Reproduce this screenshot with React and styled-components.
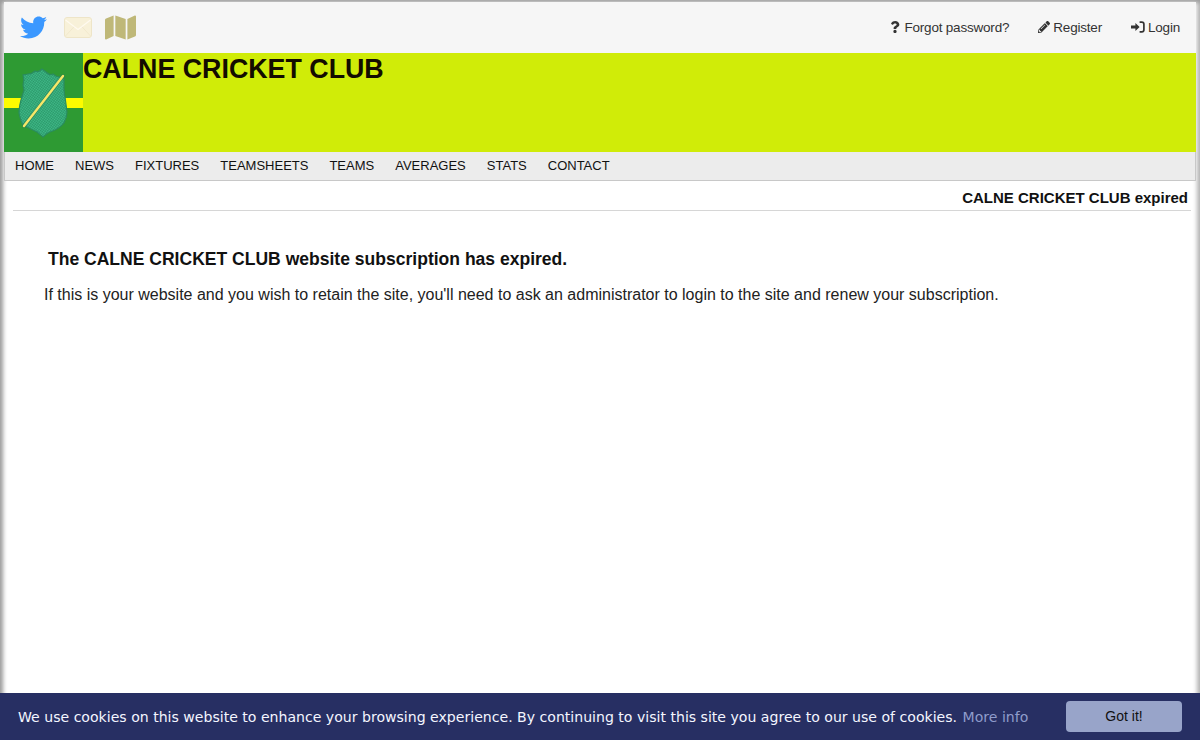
import React from 'react'
import styled, { createGlobalStyle } from 'styled-components'
import { FaTwitter, FaMap, FaQuestion, FaPencilAlt } from 'react-icons/fa'

const GlobalStyle = createGlobalStyle`
html,body{
  margin:0;
  padding:0;
  height:100%;
  background:#fff;
  font-family:"Liberation Sans",Arial,sans-serif;
  overflow:hidden;
}
`

const Page = styled.div`
height:740px;
box-sizing:border-box;
padding:2px 4px 0;
background:#fff;
box-shadow:inset 3px 2px 4px #9a9a9a,inset -3px 0 4px #b4b4b4;
`

const TopBar = styled.div`
height:51px;
box-sizing:border-box;
background:#f6f6f6;
display:flex;
align-items:center;
justify-content:space-between;
padding:0 16px 1px 16px;
`

const Social = styled.div`
display:flex;
align-items:center;
`

const SocialLink = styled.a`
display:flex;
color:${props => props.$color};
margin-right:${props => props.$gap}px;
font-size:${props => props.$size}px;
`

const UserLinks = styled.div`
display:flex;
align-items:center;
gap:29px;
`

const UserLink = styled.a`
display:flex;
align-items:center;
gap:3px;
font-size:13.5px;
color:#333;
letter-spacing:-0.2px;
svg{
  font-size:12px;
}
`

const Banner = styled.div`
height:99px;
background:#d0ec08;
display:flex;
align-items:flex-start;
`

const Logo = styled.svg`
display:block;
width:79px;
height:99px;
flex:none;
`

const ClubName = styled.h1`
margin:0;
font-size:26.8px;
line-height:32px;
font-weight:bold;
color:#130c00;
`

const Nav = styled.nav`
height:29px;
box-sizing:border-box;
background:#ececec;
border:1px solid #c8c8c8;
border-top:0;
display:flex;
align-items:center;
padding:0 10px 2px 10px;
gap:21px;
`

const NavItem = styled.a`
font-size:13px;
color:#111;
`

const Crumb = styled.div`
margin:0 5px 0 9px;
height:30px;
box-sizing:border-box;
border-bottom:1px solid #d6d6d6;
text-align:right;
padding:8px 3px 0 0;
font-size:15px;
line-height:17px;
font-weight:bold;
color:#111;
`

const Content = styled.main`
padding:37px 0 0 40px;
`

const Heading = styled.h2`
margin:0 0 14px 4px;
font-size:17.55px;
line-height:22px;
font-weight:bold;
color:#111;
`

const Para = styled.p`
margin:0;
font-size:16px;
line-height:22px;
color:#222;
`

const CookieBar = styled.div`
position:fixed;
left:0;
right:0;
bottom:0;
height:47px;
background:#272f63;
display:flex;
align-items:center;
justify-content:space-between;
padding:0 18px;
box-sizing:border-box;
`

const CookieText = styled.div`
font-family:"DejaVu Sans",Verdana,sans-serif;
font-size:14.08px;
color:#f4f6ff;
white-space:nowrap;
`

const MoreInfo = styled.a`
color:#8f9ccb;
margin-left:1px;
`

const GotIt = styled.button`
width:116px;
height:31px;
background:#98a4c9;
border:0;
border-radius:4px;
font-family:"Liberation Sans",Arial,sans-serif;
font-size:14px;
color:#111;
padding:0 0 2px;
`

const menu = ['HOME','NEWS','FIXTURES','TEAMSHEETS','TEAMS','AVERAGES','STATS','CONTACT']

function LoginIcon() {
  return (
    <svg width="14" height="12" viewBox="0 0 14 12">
      <path d="M0 4.6h4.4V2l4.2 4-4.2 4V7.4H0z" fill="#333" />
      <path d="M8.6 1.2h2.2c1.2 0 2.1 1 2.1 2.1v5.4c0 1.1-.9 2.1-2.1 2.1H8.6" fill="none" stroke="#333" strokeWidth="1.7" />
    </svg>
  )
}

function MailIcon() {
  return (
    <svg width="28" height="21" viewBox="0 0 28 21">
      <rect x="0.5" y="0.5" width="27" height="20" rx="2.5" fill="#f8f1d9" stroke="#eee5c8" />
      <path d="M1.5 3L14 12.5 26.5 3" fill="none" stroke="#fffaf0" strokeWidth="1.2" />
      <path d="M1.5 19L10 9.8M26.5 19L18 9.8" fill="none" stroke="#efe6ca" strokeWidth="0.8" />
    </svg>
  )
}

function ClubLogo() {
  return (
    <Logo viewBox="0 0 79 99">
      <defs>
        <pattern id="weave" width="2" height="2" patternUnits="userSpaceOnUse" patternTransform="rotate(35)">
          <rect width="2" height="2" fill="#34a878" />
          <rect width="1" height="1" fill="#2b9468" />
          <rect x="1" y="1" width="1" height="1" fill="#43bd8b" />
        </pattern>
      </defs>
      <rect width="79" height="99" fill="#2e9a33" />
      <rect y="45" width="79" height="10" fill="#fdfb00" />
      <path d="M38 16c-2 2-5 3-7 2-2 2-4 3-7 3l-5 1c1 3 1 7 0 10l1 5c-2 7-5 14-5 23 1 5 2 9 4 12 5 3 10 5 14 7l6 5c2-2 4-4 7-5 6-2 11-5 14-9 2-4 3-7 3-11-1-8-2-15-3-22 0-5 0-9 0-12l-4-1c-3 0-5-1-7-3-2 1-5 0-7-2z" fill="url(#weave)" stroke="#2a8c5f" strokeWidth="1.2" />
      <path d="M20 73L59 23" stroke="#2a7a52" strokeWidth="4" strokeLinecap="round" opacity="0.5" />
      <path d="M20 73L59 23" stroke="#f6e768" strokeWidth="2.4" strokeLinecap="round" />
    </Logo>
  )
}

export default function App() {
  return (
    <Page>
      <GlobalStyle />
      <TopBar>
        <Social>
          <SocialLink $color="#3b98ff" $size={27} $gap={17}><FaTwitter /></SocialLink>
          <SocialLink $color="#f6efd5" $size={28} $gap={13}><MailIcon /></SocialLink>
          <SocialLink $color="#bfb878" $size={31} $gap={0}><FaMap /></SocialLink>
        </Social>
        <UserLinks>
          <UserLink><FaQuestion />Forgot password?</UserLink>
          <UserLink><FaPencilAlt />Register</UserLink>
          <UserLink><LoginIcon />Login</UserLink>
        </UserLinks>
      </TopBar>
      <Banner>
        <ClubLogo />
        <ClubName>CALNE CRICKET CLUB</ClubName>
      </Banner>
      <Nav>
        {menu.map(item => <NavItem key={item}>{item}</NavItem>)}
      </Nav>
      <Crumb>CALNE CRICKET CLUB expired</Crumb>
      <Content>
        <Heading>The CALNE CRICKET CLUB website subscription has expired.</Heading>
        <Para>If this is your website and you wish to retain the site, you'll need to ask an administrator to login to the site and renew your subscription.</Para>
      </Content>
      <CookieBar>
        <CookieText>We use cookies on this website to enhance your browsing experience. By continuing to visit this site you agree to our use of cookies. <MoreInfo>More info</MoreInfo></CookieText>
        <GotIt>Got it!</GotIt>
      </CookieBar>
    </Page>
  )
}
